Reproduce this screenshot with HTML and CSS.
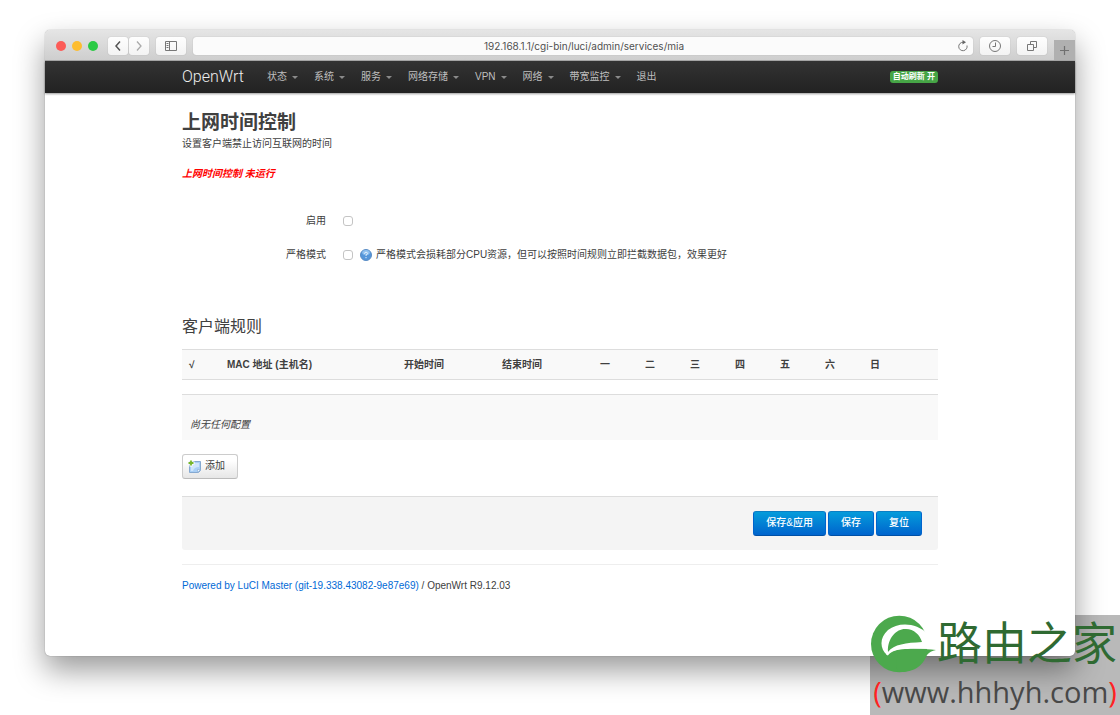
FILE: index.html
```html
<!DOCTYPE html>
<html lang="zh-CN">
<head>
<meta charset="utf-8">
<title>上网时间控制 - OpenWrt</title>
<link rel="stylesheet" href="styles.css">
</head>
<body>
<div class="stage">
  <div class="mark-backdrop"></div>
  <div class="window">
    <header class="toolbar">
      <div class="lights"><span class="light red"></span><span class="light yellow"></span><span class="light green"></span></div>
      <div class="history">
        <button class="tool narrow" type="button" aria-label="后退"><svg width="20" height="18" viewBox="0 0 20 18"><path d="M12 4.5 8 9l4 4.500" fill="none" stroke="#555" stroke-width="1.500"/></svg></button>
        <button class="tool narrow" type="button" aria-label="前进"><svg width="20" height="18" viewBox="0 0 20 18"><path d="M8 4.500 12 9l-4 4.500" fill="none" stroke="#aaa" stroke-width="1.300"/></svg></button>
      </div>
      <button class="tool" type="button" aria-label="边栏"><svg width="14" height="12" viewBox="0 0 14 12"><path d="M1.500 1.500h11v9h-11zM5.500 1.500v9M2.500 3.500h2M2.500 5.500h2M2.500 7.500h2" fill="none" stroke="#777"/></svg></button>
      <div class="address">
        <input class="url" type="text" aria-label="地址" value="192.168.1.1/cgi-bin/luci/admin/services/mia">
        <button class="reload" type="button" aria-label="重新载入"><svg width="12" height="12" viewBox="0 0 12 12"><path d="M10 5.500A4.200 4.200 0 1 1 6 2.300" fill="none" stroke="#777"/><path d="M5.500 0 9 2.300 5.500 4.500z" fill="#666"/></svg></button>
      </div>
      <button class="tool" type="button" aria-label="历史记录"><svg width="14" height="14" viewBox="0 0 14 14"><circle cx="7" cy="7" r="5.500" fill="none" stroke="#777"/><path d="M7.500 3.500v4h-3" fill="none" stroke="#777"/></svg></button>
      <button class="tool" type="button" aria-label="标签页"><svg width="12" height="12" viewBox="0 0 12 12"><path d="M1.500 4.500h6v6h-6zM4.500 4V1.500h6v6H8" fill="none" stroke="#777"/></svg></button>
      <button class="new-tab" type="button" aria-label="新标签页"><svg width="11" height="11" viewBox="0 0 11 11"><path d="M5.500 1v9M1 5.500h9" stroke="#707070" stroke-width="1.200"/></svg></button>
    </header>
    <nav class="navbar">
      <div class="container nav-inner">
        <a class="brand" href="#">OpenWrt</a>
        <ul class="menu">
          <li><a class="drop" href="#">状态</a></li>
          <li><a class="drop" href="#">系统</a></li>
          <li><a class="drop" href="#">服务</a></li>
          <li><a class="drop" href="#">网络存储</a></li>
          <li><a class="drop" href="#">VPN</a></li>
          <li><a class="drop" href="#">网络</a></li>
          <li><a class="drop" href="#">带宽监控</a></li>
          <li><a href="#">退出</a></li>
        </ul>
        <button class="refresh" type="button">自动刷新 开</button>
      </div>
    </nav>
    <main class="container content">
      <h1>上网时间控制</h1>
      <p class="descr">设置客户端禁止访问互联网的时间</p>
      <p class="status">上网时间控制 未运行</p>
      <form>
        <div class="options">
          <div class="option">
            <label for="enable">启用</label>
            <input id="enable" type="checkbox">
          </div>
          <div class="option">
            <label for="strict">严格模式</label>
            <input id="strict" type="checkbox">
            <span class="hint"><svg width="12" height="12" viewBox="0 0 12 12"><circle cx="6" cy="6" r="5.500" fill="#5596da" stroke="#5a8cc4"/><ellipse cx="6" cy="3.500" rx="3.800" ry="2.500" fill="#8fc0ef"/><path d="M4.500 4.800q0-1.600 1.500-1.600t1.500 1.300Q7.500 5.500 6 6.100v.8M6 8v1.200" fill="none" stroke="#e4f0fc"/></svg>严格模式会损耗部分CPU资源，但可以按照时间规则立即拦截数据包，效果更好</span>
          </div>
        </div>
        <h2>客户端规则</h2>
        <table class="rules">
          <colgroup><col class="c-check"><col class="c-mac"><col class="c-time"><col class="c-time"><col class="c-day"><col class="c-day"><col class="c-day"><col class="c-day"><col class="c-day"><col class="c-day"><col class="c-day"><col></colgroup>
          <thead><tr><th>√</th><th>MAC 地址 (主机名)</th><th>开始时间</th><th>结束时间</th><th>一</th><th>二</th><th>三</th><th>四</th><th>五</th><th>六</th><th>日</th><th></th></tr></thead>
          <tbody>
            <tr class="spacer"><td colspan="12"></td></tr>
            <tr class="empty"><td colspan="12"><em>尚无任何配置</em></td></tr>
          </tbody>
        </table>
        <button class="add" type="button"><svg width="13" height="13" viewBox="0 0 13 13"><path d="M1.500 1.500h11v9l-2 2h-9z" fill="#a9cff6" stroke="#86a9d0"/><path d="M3 3h8v4q-5 0-6 4H3z" fill="#cfe5fb"/><path d="M9.500 12.500v-3h3z" fill="#eef6fe" stroke="#86a9d0" stroke-width=".6"/><path d="M3 0v6.500M0 3h6.500" stroke="#fff" stroke-width="3"/><path d="M3 .500v5M.500 3h5" stroke="#75b52c" stroke-width="1.800"/></svg>添加</button>
        <div class="actions">
          <button class="primary" type="submit">保存&amp;应用</button>
          <button class="primary" type="button">保存</button>
          <button class="primary" type="reset">复位</button>
        </div>
      </form>
      <footer class="footer"><a href="#">Powered by LuCI Master (git-19.338.43082-9e87e69)</a> / OpenWrt R9.12.03</footer>
    </main>
  </div>
  <div class="mark">
    <div class="mark-top">
      <svg class="mark-logo" width="67" height="58" viewBox="0 0 67 58"><circle cx="29.300" cy="29" r="28.300" fill="#4ca94d"/><path d="M58 19C46 7 28 7 18 15C9 23 10 34 17 40C22 34 32 33 66 34L62 22Z" fill="#fff"/><path d="M18 37C17 22 28 13 36 14C44 14 50 20 52 27C36 28 24 29 18 37Z" fill="#4ca94d"/><path d="M66 35C45 33 31 34 28 40C26 45 26 53 28 57C48 58 54 47 57 40Q60 36 66 35Z" fill="#4ca94d"/><path d="M17 40C22 33 34 31 60 33" fill="none" stroke="#fff" stroke-width="2"/></svg>
      <span class="mark-name">路由之家</span>
    </div>
    <div class="mark-url"><b>(</b>www.hhhyh.com<b>)</b></div>
  </div>
</div>
</body>
</html>
```
FILE: styles.css
```css
* { box-sizing: border-box; }

body {
  margin: 0;
  background: #fff;
  color: #404040;
  font-family: "Liberation Sans", "Noto Sans CJK SC", sans-serif;
  font-size: 10px;
  line-height: 14px;
}

button, input { font: inherit; color: inherit; margin: 0; }
button { display: inline-flex; align-items: center; justify-content: center; padding: 0; border: 0; }
a { color: #0069d6; text-decoration: none; }
h1, h2, p { margin: 0; }

.stage {
  position: relative;
  isolation: isolate;
  min-height: 100vh;
  padding: 30px 45px 59px;
  overflow: hidden;
}

.window {
  position: relative;
  border-radius: 5px;
  background: #fff;
  box-shadow: 0 14px 30px rgba(0, 0, 0, .4), 0 0 1px rgba(0, 0, 0, .5);
}

/* Browser toolbar */
.toolbar {
  display: flex;
  align-items: center;
  gap: 7px;
  height: 31px;
  padding: 1px 0 0 11px;
  border-radius: 5px 5px 0 0;
  border-bottom: 1px solid #aaa;
  background: linear-gradient(#e5e5e5, #cecece);
  overflow: hidden;
}
.lights { display: flex; gap: 6px; margin-right: 3px; }
.light { width: 10px; height: 10px; border-radius: 50%; }
.red { background: #fc5b57; }
.yellow { background: #fdbd30; }
.green { background: #2aca44; }
.history { display: flex; gap: 1px; }
.tool {
  width: 30px;
  height: 18px;
  border-radius: 3px;
  background: linear-gradient(#fefefe, #f3f3f3);
  box-shadow: 0 0 1px rgba(0, 0, 0, .3);
}
.narrow { width: 20px; }
.address {
  flex: 1;
  display: flex;
  align-items: center;
  height: 18px;
  padding: 0 4px;
  border-radius: 3px;
  background: #fbfbfb;
  box-shadow: 0 0 1px rgba(0, 0, 0, .3);
}
.url {
  flex: 1;
  min-width: 0;
  padding: 0 0 0 14px;
  border: 0;
  background: none;
  color: #505050;
  font-family: Inter, sans-serif;
  text-align: center;
}
.reload { background: none; }
.new-tab { align-self: flex-end; width: 21px; height: 20px; background: #b0b0b0; }

/* Site navigation */
.container { width: 100%; max-width: 756px; margin: 0 auto; }
.navbar {
  background: linear-gradient(#333, #222);
  box-shadow: 0 1px 2px rgba(0, 0, 0, .4);
}
.nav-inner { display: flex; align-items: center; height: 32px; }
.brand { width: 85px; color: #eee; font-family: Roboto, sans-serif; font-size: 16px; font-weight: 300; }
.menu { display: flex; flex: 1; gap: 16px; margin: 0; padding: 0; list-style: none; }
.menu a { display: flex; align-items: center; gap: 5px; color: #bfbfbf; }
.drop::after {
  content: "";
  border: 3px solid transparent;
  border-top-color: #8a8a8a;
  border-bottom: 0;
}
.refresh {
  height: 12px;
  padding: 0 3px;
  border-radius: 3px;
  background: #46a546;
  color: #fff;
  font-size: 8px;
  font-weight: 700;
}

/* Page */
.content { padding: 17px 0 63px; }
h1 { font-size: 19px; line-height: 26px; }
.descr { margin-top: 1px; }
.status { margin-top: 16px; color: #f00; font-weight: 700; font-style: italic; }
.options { display: grid; gap: 20px; margin-top: 33px; }
.option { display: flex; align-items: center; }
.option label { width: 144px; text-align: right; }
.option input {
  appearance: none;
  width: 10px;
  height: 10px;
  margin-left: 17px;
  border: 1px solid #c4c4c4;
  border-radius: 3px;
  background: #fff;
}
.hint { display: flex; align-items: center; gap: 4px; margin-left: 7px; }
h2 { margin-top: 54px; font-size: 16px; font-weight: 400; line-height: 22px; }

.rules { width: 100%; margin-top: 11px; border-collapse: collapse; table-layout: fixed; }
.c-check { width: 38px; }
.c-mac { width: 177px; }
.c-time { width: 98px; }
.c-day { width: 45px; }
.rules th { height: 30px; padding: 0 7px; border-top: 1px solid #ddd; border-bottom: 1px solid #ddd; background: #f9f9f9; text-align: left; white-space: nowrap; }
.spacer td { height: 15px; padding: 0; }
.empty td { height: 45px; padding: 15px 8px 0; border-top: 1px solid #ddd; background: #f9f9f9; }

.add {
  gap: 4px;
  height: 25px;
  margin-top: 14px;
  padding: 0 12px 0 5px;
  border: 1px solid #ccc;
  border-bottom-color: #bbb;
  border-radius: 3px;
  background: linear-gradient(#fff 25%, #e6e6e6);
}
.actions {
  display: flex;
  justify-content: flex-end;
  gap: 2px;
  margin-top: 17px;
  padding: 14px 16px;
  border-top: 1px solid #ddd;
  border-radius: 0 0 3px 3px;
  background: #f4f4f4;
}
.primary {
  height: 25px;
  padding: 0 12px;
  border: 1px solid #0064cd;
  border-color: #0b7fc4 #0064cd #0050a5;
  border-radius: 3px;
  background: linear-gradient(#049cdb, #0064cd);
  color: #fff;
  font-weight: 500;
}
.footer { margin-top: 14px; padding-top: 14px; border-top: 1px solid #eee; }

/* Corner mark: the grey plate lies behind the window, the logo above it */
.mark-backdrop, .mark { position: absolute; right: 0; bottom: 0; width: 250px; height: 100px; }
.mark-backdrop { z-index: 1; background: #b9b9b9; }
.window, .mark { z-index: 2; }
.mark { pointer-events: none; }
.mark-top { display: flex; height: 58px; white-space: nowrap; }
.mark-name { color: #2f6a32; font-size: 45px; font-weight: 400; line-height: 60px; }
.mark-url { color: #484848; font-family: "Open Sans", sans-serif; font-size: 29px; line-height: 38px; text-align: center; white-space: nowrap; }
.mark-url b { color: #f22; font-weight: 400; }
```
